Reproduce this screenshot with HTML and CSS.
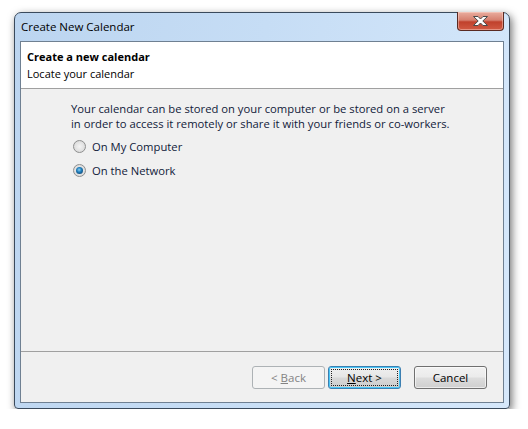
FILE: index.html
```html
<!DOCTYPE html>
<html>
<head>
<meta charset="utf-8">
<link rel="stylesheet" href="styles.css">
</head>
<body>
<div class="window">
  <div class="titlebar">
    <span class="title">Create New Calendar</span>
    <div class="close">
      <svg width="19" height="12" viewBox="0 0 19 12">
        <path d="M2.5 1.5 L7 1.5 L9.5 4 L12 1.5 L16.5 1.5 L11.8 6 L16.5 10.5 L12 10.5 L9.5 8 L7 10.5 L2.5 10.5 L7.2 6 Z" fill="#fff" stroke="#4a4a4a" stroke-width="1" stroke-linejoin="round"/>
      </svg>
    </div>
  </div>
  <div class="client">
    <div class="header">
      <div class="h-title">Create a new calendar</div>
      <div class="h-sub">Locate your calendar</div>
    </div>
    <div class="content">
      <p class="desc">Your calendar can be stored on your computer or be stored on a server<br>in order to access it remotely or share it with your friends or co-workers.</p>
      <div class="radio"><span class="dot"></span><span>On My Computer</span></div>
      <div class="radio checked"><span class="dot"></span><span>On the Network</span></div>
    </div>
    <div class="footer">
      <div class="btn disabled"><span>&lt; <u>B</u>ack</span></div>
      <div class="btn default"><span class="focus"><span><u>N</u>ext &gt;</span></span></div>
      <div class="btn cancel"><span>Cancel</span></div>
    </div>
  </div>
</div>
</body>
</html>
```

FILE: styles.css
```css
html, body {
  margin: 0;
  background: #fff;
}
body {
  padding: 12px 0 0 14px;
  font-family: "Open Sans", "Noto Sans", sans-serif;
  font-size: 11.25px;
  color: #000;
}
.window {
  width: 496px;
  height: 397px;
  box-sizing: border-box;
  border: 1px solid #3a4a5c;
  border-radius: 7px 7px 4px 4px;
  background: linear-gradient(100deg, #bcd5f0 0%, #c6ddf5 45%, #d6e8fb 100%);
  padding: 0 5px 5px;
  display: flex;
  flex-direction: column;
  box-shadow: 2px 3px 9px rgba(0, 0, 0, 0.55);
}
.titlebar {
  height: 28px;
  display: flex;
  align-items: flex-start;
}
.title {
  padding: 6px 0 0 1px;
  line-height: 15px;
  font-size: 11.5px;
}
.close {
  margin-left: auto;
  margin-top: -1px;
  width: 47px;
  height: 19px;
  box-sizing: border-box;
  border: 1px solid #5a2a22;
  border-top: none;
  border-radius: 0 0 4px 4px;
  background: linear-gradient(#e9ad9f 0%, #d6806f 45%, #c0412c 55%, #d15a43 100%);
  display: flex;
  align-items: center;
  justify-content: center;
  box-shadow: inset 0 0 0 1px rgba(255, 220, 210, 0.45);
}
.close svg {
  display: block;
}
.client {
  flex: 1;
  border: 1px solid #6f8092;
  background: #f0f0f0;
  display: flex;
  flex-direction: column;
}
.header {
  height: 46px;
  background: #fff;
  border-bottom: 1px solid #a0a0a0;
  padding: 0 6px;
  display: flex;
  flex-direction: column;
}
.h-title {
  margin-top: 6px;
  line-height: 17px;
  font-weight: bold;
  font-size: 11px;
}
.h-sub {
  line-height: 17px;
  font-size: 11px;
}
.content {
  flex: 1;
  padding: 12px 0 0 50px;
}
.desc {
  margin: 0;
  line-height: 15px;
  color: #10203a;
}
.radio {
  margin-top: 3px;
  height: 24px;
  display: flex;
  align-items: center;
  gap: 6px;
  padding-left: 2px;
  color: #10203a;
}
.radio + .radio {
  margin-top: 0;
}
.dot {
  width: 13px;
  height: 13px;
  box-sizing: border-box;
  border-radius: 50%;
  border: 1px solid #8e8f8f;
  background: radial-gradient(circle at 50% 50%, #f4f4f4 0%, #e2e2e2 55%, #cfcfcf 100%);
  position: relative;
}
.radio.checked .dot::after {
  content: "";
  position: absolute;
  left: 2px;
  top: 2px;
  width: 7px;
  height: 7px;
  border-radius: 50%;
  background: radial-gradient(circle at 45% 40%, #8fd0f2 0%, #1f7fbd 40%, #0b2f55 100%);
}
.footer {
  height: 51px;
  box-sizing: border-box;
  border-top: 1px solid #a0a0a0;
  display: flex;
  justify-content: flex-end;
  align-items: flex-start;
  padding: 14px 16px 0 0;
}
.btn {
  width: 73px;
  height: 23px;
  box-sizing: border-box;
  border: 1px solid #707070;
  border-radius: 3px;
  background: linear-gradient(#f2f2f2 0%, #ebebeb 48%, #dddddd 52%, #cfcfcf 100%);
  display: flex;
  align-items: center;
  justify-content: center;
  box-shadow: inset 0 0 0 1px rgba(255, 255, 255, 0.6);
  font-size: 11.5px;
}
.btn.disabled {
  border-color: #adb2b5;
  background: #f4f4f4;
  color: #838383;
  box-shadow: none;
}
.btn.default {
  margin-left: 3px;
  border-color: #3c7fb1;
  background: linear-gradient(#f0f0f0 0%, #e6e6e6 48%, #d8d8d8 52%, #cccccc 100%);
  box-shadow: inset 0 0 0 1px #48c6f7;
  padding: 2px;
}
.focus {
  flex: 1;
  align-self: stretch;
  border: 1px dotted #222;
  display: flex;
  align-items: center;
  justify-content: center;
}
.btn.cancel {
  margin-left: 13px;
}
```
